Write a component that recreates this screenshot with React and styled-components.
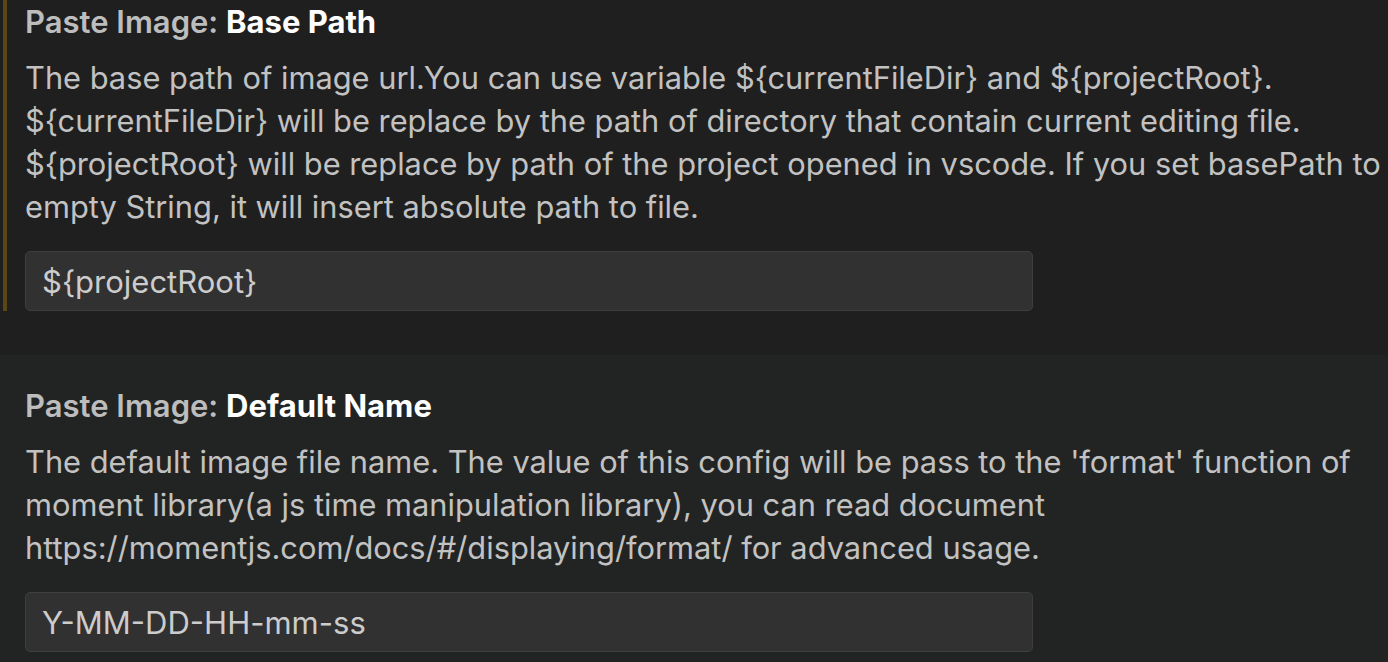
import React from 'react';
import styled, { createGlobalStyle } from 'styled-components';

const GlobalStyle = createGlobalStyle`
  html, body {
    margin: 0;
    padding: 0;
    background: #1f1f1f;
  }
  body {
    font-family: Inter, "Noto Sans", "Liberation Sans", sans-serif;
    -webkit-font-smoothing: antialiased;
  }
`;

const Page = styled.div`
  width: 1388px;
  height: 662px;
  overflow: hidden;
  background: #1f1f1f;
`;

const SettingItem = styled.div`
  padding: ${(p) => (p.$cropped ? '0' : '29px')} 0 44px 3px;
  background: ${(p) => (p.$focused ? '#222423' : '#1f1f1f')};
`;

const Contents = styled.div`
  border-left: 4px solid ${(p) => (p.$modified ? '#5d4616' : 'transparent')};
  padding-left: 18px;
  padding-right: 0;
`;

const Title = styled.div`
  font-size: 31px;
  line-height: 44px;
  font-weight: 700;
  color: #ffffff;
  white-space: nowrap;

  .category {
    color: #bdbdbd;
    font-weight: 600;
  }
`;

const Description = styled.div`
  margin-top: 12px;
  font-size: 30.8px;
  line-height: 43px;
  color: #c2c2c2;
  white-space: pre-line;
`;

const TextInput = styled.input`
  display: block;
  box-sizing: border-box;
  margin-top: 23px;
  width: 1008px;
  height: 60px;
  padding: 0 16px;
  background: #313131;
  border: 1px solid #3e3e3e;
  border-radius: 5px;
  color: #cccccc;
  font-family: inherit;
  font-size: 31px;
  outline: none;
`;

const settings = [
  {
    category: 'Paste Image:',
    label: 'Base Path',
    description:
      'The base path of image url.You can use variable ${currentFileDir} and ${projectRoot}.\n${currentFileDir} will be replace by the path of directory that contain current editing file.\n${projectRoot} will be replace by path of the project opened in vscode. If you set basePath to empty String, it will insert absolute path to file.',
    value: '${projectRoot}',
    modified: true,
    cropped: true,
  },
  {
    category: 'Paste Image:',
    label: 'Default Name',
    description:
      "The default image file name. The value of this config will be pass to the 'format' function of moment library(a js time manipulation library), you can read document https://momentjs.com/docs/#/displaying/format/ for advanced usage.",
    value: 'Y-MM-DD-HH-mm-ss',
    focused: true,
  },
];

function Setting({ item }) {
  return (
    <SettingItem $cropped={item.cropped} $focused={item.focused}>
      <Contents $modified={item.modified}>
        <Title>
          <span className="category">{item.category} </span>
          {item.label}
        </Title>
        <Description>{item.description}</Description>
        <TextInput defaultValue={item.value} spellCheck={false} />
      </Contents>
    </SettingItem>
  );
}

export default function App() {
  return (
    <Page>
      <GlobalStyle />
      {settings.map((item) => (
        <Setting key={item.label} item={item} />
      ))}
    </Page>
  );
}
